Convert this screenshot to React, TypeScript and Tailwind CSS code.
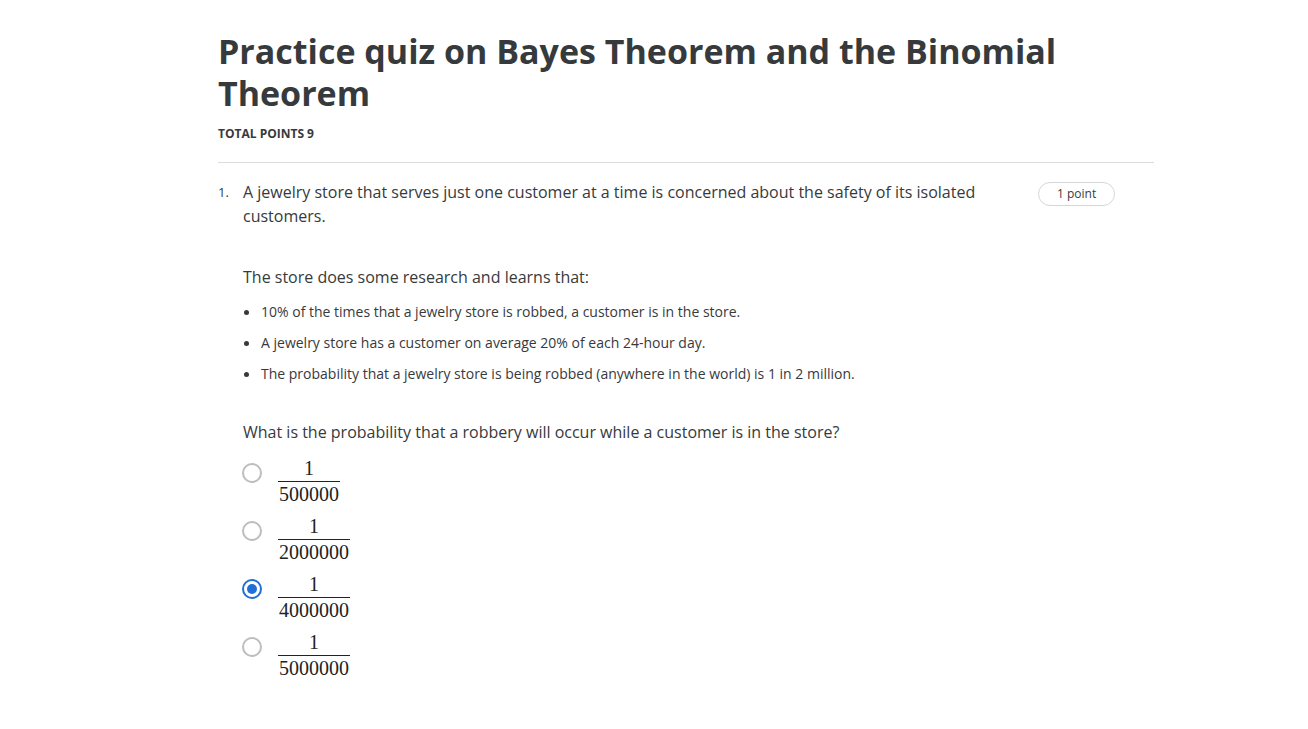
import React from "react";

const Frac = ({ den }: { den: string }) => (
  <span
    className="inline-flex flex-col items-center text-[20px] leading-[22px] text-[#222]"
    style={{ fontFamily: '"Liberation Serif", "Times New Roman", serif' }}
  >
    <span className="px-[1px] pb-[2px]">1</span>
    <span className="border-t border-[#222] px-[1px] pt-[1px]">{den}</span>
  </span>
);

const Radio = ({ checked }: { checked?: boolean }) =>
  checked ? (
    <span className="flex h-[20px] w-[20px] shrink-0 items-center justify-center rounded-full border-2 border-[#1f6fd6]">
      <span className="block h-[10px] w-[10px] rounded-full bg-[#1f6fd6]" />
    </span>
  ) : (
    <span className="block h-[20px] w-[20px] shrink-0 rounded-full border-2 border-[#bdbdbd]" />
  );

export default function App() {
  const opts = [
    { den: "500000" },
    { den: "2000000" },
    { den: "4000000", checked: true },
    { den: "5000000" },
  ];
  return (
    <div
      className="min-h-screen bg-white text-[#373a3c]"
      style={{ fontFamily: '"Open Sans", sans-serif' }}
    >
      <div className="ml-[218px] w-[936px] pt-[30px]">
        <h1 className="text-[34px] font-bold leading-[42px] text-[#373a3c]">
          Practice quiz on Bayes Theorem and the Binomial Theorem
        </h1>
        <div className="mt-[12px] text-[12px] font-bold leading-[16px]">TOTAL POINTS 9</div>
        <div className="mt-[20px] border-t border-[#dcdcdc]" />
        <div className="mt-[17px] flex">
          <div className="w-[25px] pt-[1px] text-[13px] leading-[22px]">1.</div>
          <div className="flex-1">
            <div className="flex items-start">
              <p className="w-[760px] text-[16px] leading-[24px]">
                A jewelry store that serves just one customer at a time is concerned about the safety of its isolated customers.
              </p>
              <span className="ml-[35px] mt-[2px] rounded-full border border-[#d6d6d6] px-[18px] text-[12px] leading-[22px]">
                1 point
              </span>
            </div>
            <p className="mt-[37px] text-[16px] leading-[24px]">The store does some research and learns that:</p>
            <ul className="mt-[13px] flex flex-col gap-[11px] text-[14px] leading-[20px]">
              <li className="flex items-center">
                <span className="ml-[1px] mr-[12px] block h-[5px] w-[5px] shrink-0 rounded-full bg-[#373a3c]" />
                10% of the times that a jewelry store is robbed, a customer is in the store.
              </li>
              <li className="flex items-center">
                <span className="ml-[1px] mr-[12px] block h-[5px] w-[5px] shrink-0 rounded-full bg-[#373a3c]" />
                A jewelry store has a customer on average 20% of each 24-hour day.
              </li>
              <li className="flex items-center">
                <span className="ml-[1px] mr-[12px] block h-[5px] w-[5px] shrink-0 rounded-full bg-[#373a3c]" />
                The probability that a jewelry store is being robbed (anywhere in the world) is 1 in 2 million.
              </li>
            </ul>
            <p className="mt-[36px] text-[16px] leading-[24px]">
              What is the probability that a robbery will occur while a customer is in the store?
            </p>
            <div className="mt-[13px] flex flex-col gap-[10px]">
              {opts.map((o) => (
                <div key={o.den} className="flex items-center">
                  <span className="-mt-[16px] ml-[-1px] block">
                    <Radio checked={o.checked} />
                  </span>
                  <span className="ml-[16px] block">
                    <Frac den={o.den} />
                  </span>
                </div>
              ))}
            </div>
          </div>
        </div>
      </div>
    </div>
  );
}
